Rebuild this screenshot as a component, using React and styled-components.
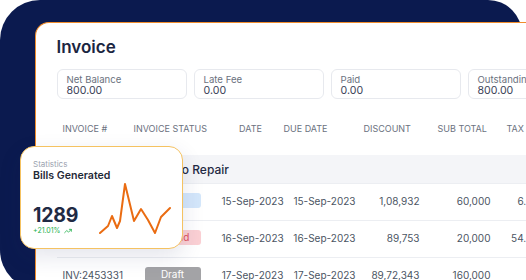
import React from 'react';
import styled, { createGlobalStyle } from 'styled-components';
import { TrendingUp } from 'lucide-react';

const GlobalStyle = createGlobalStyle`
  html, body {
    margin: 0;
    padding: 0;
    background: #ffffff;
    overflow: hidden;
    font-family: Inter, 'Liberation Sans', sans-serif;
  }
  * {
    box-sizing: border-box;
  }
`;

const Frame = styled.div`
  position: relative;
  width: 522px;
  height: 290px;
  background: #0b1a4f;
  border-radius: 40px 34px 0 40px;
  padding: 22px 0 0 35px;
`;

const Card = styled.section`
  width: 560px;
  height: 300px;
  background: #ffffff;
  border-top: 1.5px solid #f08c2b;
  border-left: 1.5px solid #f08c2b;
  border-top-left-radius: 14px;
  padding: 14px 0 0 20.5px;
  overflow: hidden;
`;

const Title = styled.h1`
  margin: 0 0 12px;
  font-size: 17px;
  line-height: 20px;
  font-weight: 600;
  color: #1b2541;
`;

const Summary = styled.div`
  display: flex;
  gap: 7px;
`;

const SummaryBox = styled.div`
  flex: 0 0 130px;
  height: 30px;
  border: 1px solid #e7e9ee;
  border-radius: 6px;
  padding: 4px 9px;
`;

const SummaryLabel = styled.div`
  font-size: 9.6px;
  line-height: 11px;
  color: #6b7280;
  white-space: nowrap;
`;

const SummaryValue = styled.div`
  font-size: 10.6px;
  line-height: 12px;
  color: #3b4257;
`;

const Table = styled.div`
  margin-top: 14px;
`;

const template = '77px 84px 66px 76px 62px 72px 66px';

const HeadRow = styled.div`
  display: grid;
  grid-template-columns: ${template};
  height: 30px;
  align-items: center;
`;

const Th = styled.div`
  font-size: 9px;
  color: #6b7280;
  text-transform: uppercase;
  white-space: nowrap;
  text-align: ${(p) => p.$align};
  padding: ${(p) => p.$pad};
`;

const GroupRow = styled.div`
  margin-top: 12px;
  height: 29px;
  background: #f4f5f8;
  border-bottom: 1px solid #eceef2;
  display: flex;
  align-items: center;
  padding-left: 11px;
  font-size: 12px;
  font-weight: 500;
  color: #1f2a44;
`;

const Row = styled.div`
  display: grid;
  grid-template-columns: ${template};
  height: 37px;
  align-items: center;
  border-bottom: 1px solid #eceef2;
  padding-bottom: 3px;
`;

const Td = styled.div`
  font-size: 10px;
  color: #4b5563;
  white-space: nowrap;
  text-align: ${(p) => p.$align};
  padding: ${(p) => p.$pad};
`;

const tones = {
  blue: { bg: '#d4e7fb', fg: '#3b82f6' },
  red: { bg: '#fbd0d4', fg: '#e0505e' },
  grey: { bg: '#a3a3a6', fg: '#ffffff' },
};

const Badge = styled.span`
  display: inline-block;
  width: 56px;
  height: 15px;
  line-height: 15px;
  margin-left: 11px;
  border-radius: 3px;
  text-align: center;
  font-size: 10px;
  background: ${(p) => tones[p.$tone].bg};
  color: ${(p) => tones[p.$tone].fg};
`;

const StatsCard = styled.div`
  position: absolute;
  left: 20px;
  top: 146px;
  width: 163px;
  height: 103px;
  background: #ffffff;
  border: 1.5px solid #f5c261;
  border-radius: 14px;
  padding: 12px 11px 0 12px;
  box-shadow: 0 8px 22px rgba(30, 40, 100, 0.12);
`;

const StatsLabel = styled.div`
  font-size: 8px;
  line-height: 10px;
  color: #9ca3af;
`;

const StatsTitle = styled.div`
  font-size: 10.6px;
  line-height: 13px;
  font-weight: 600;
  color: #1f2937;
`;

const StatsBody = styled.div`
  display: flex;
  align-items: flex-end;
  justify-content: space-between;
`;

const Count = styled.div`
  font-size: 19.5px;
  line-height: 22px;
  font-weight: 700;
  color: #1f2a44;
  letter-spacing: -0.2px;
`;

const Change = styled.div`
  display: flex;
  align-items: center;
  gap: 3px;
  font-size: 7px;
  line-height: 9px;
  color: #22b14c;
`;

const columns = [
  { label: 'Invoice #', h: ['left', '0 0 0 6px'], b: ['left', '0 0 0 6px'] },
  { label: 'Invoice Status', h: ['left', '0'], b: ['left', '0'] },
  { label: 'Date', h: ['center', '0'], b: ['center', '0 0 0 4px'] },
  { label: 'Due Date', h: ['left', '0'], b: ['right', '0 4px 0 0'] },
  { label: 'Discount', h: ['left', '0 0 0 4px'], b: ['right', '0 2px 0 0'] },
  { label: 'Sub Total', h: ['left', '0 0 0 16px'], b: ['right', '0 3px 0 0'] },
  { label: 'Tax', h: ['left', '0 0 0 13px'], b: ['right', '0 21px 0 0'] },
];

const summary = [
  { label: 'Net Balance', value: '800.00' },
  { label: 'Late Fee', value: '0.00' },
  { label: 'Paid', value: '0.00' },
  { label: 'Outstanding', value: '800.00' },
];

const rows = [
  { id: 'INV:2453329', status: 'Paid', tone: 'blue', date: '15-Sep-2023', due: '15-Sep-2023', discount: '1,08,932', sub: '60,000', tax: '6.00' },
  { id: 'INV:2453330', status: 'Unpaid', tone: 'red', date: '16-Sep-2023', due: '16-Sep-2023', discount: '89,753', sub: '20,000', tax: '54.00' },
  { id: 'INV:2453331', status: 'Draft', tone: 'grey', date: '17-Sep-2023', due: '17-Sep-2023', discount: '89,72,343', sub: '160,000', tax: '' },
];

const Sparkline = () => (
  <svg width="72" height="53" viewBox="0 0 72 53" fill="none">
    <polyline
      points="1,51 9,44 13,34 18,46 21,39 26,2 35,39 42,27 49,38 56,51 62,35 71,26"
      stroke="#ea6c12"
      strokeWidth="2"
      strokeLinejoin="round"
      strokeLinecap="round"
    />
  </svg>
);

const App = () => {
  return (
    <>
      <GlobalStyle />
      <Frame>
        <Card>
          <Title>Invoice</Title>
          <Summary>
            {summary.map((s) => (
              <SummaryBox key={s.label}>
                <SummaryLabel>{s.label}</SummaryLabel>
                <SummaryValue>{s.value}</SummaryValue>
              </SummaryBox>
            ))}
          </Summary>
          <Table>
            <HeadRow>
              {columns.map((c) => (
                <Th key={c.label} $align={c.h[0]} $pad={c.h[1]}>
                  {c.label}
                </Th>
              ))}
            </HeadRow>
            <GroupRow>Lakshmi Motors Auto Repair</GroupRow>
            {rows.map((r) => {
              const cells = [r.id, null, r.date, r.due, r.discount, r.sub, r.tax];
              return (
                <Row key={r.id}>
                  {cells.map((v, i) => (
                    <Td key={i} $align={columns[i].b[0]} $pad={columns[i].b[1]}>
                      {i === 1 ? <Badge $tone={r.tone}>{r.status}</Badge> : v}
                    </Td>
                  ))}
                </Row>
              );
            })}
          </Table>
        </Card>
        <StatsCard>
          <StatsLabel>Statistics</StatsLabel>
          <StatsTitle>Bills Generated</StatsTitle>
          <StatsBody>
            <div>
              <Count>1289</Count>
              <Change>
                +21.01% <TrendingUp size={8} strokeWidth={2.5} />
              </Change>
            </div>
            <Sparkline />
          </StatsBody>
        </StatsCard>
      </Frame>
    </>
  );
};

export default App;
